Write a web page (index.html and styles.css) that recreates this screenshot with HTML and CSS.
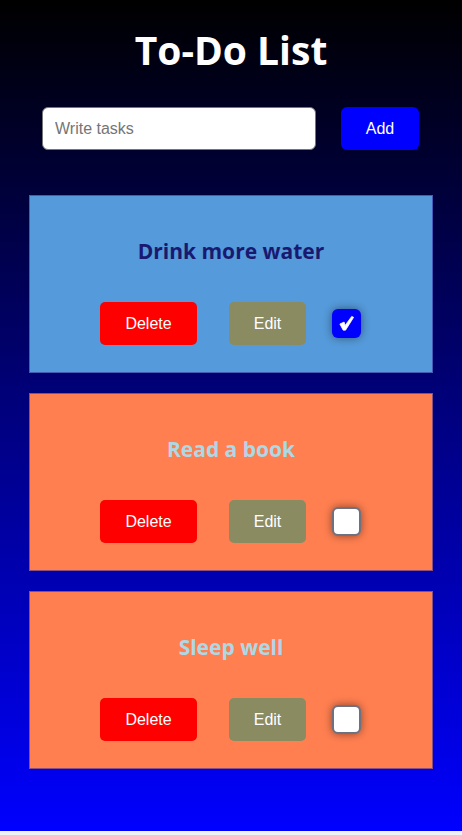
FILE: index.html
```html
<!DOCTYPE html>
<html lang="en">
<head>
<meta charset="utf-8">
<title>To-Do List</title>
<link rel="stylesheet" href="styles.css">
</head>
<body>
<div class="app">
  <h1 class="title">To-Do List</h1>
  <div class="add-row">
    <input class="task-input" type="text" placeholder="Write tasks">
    <button class="add-btn">Add</button>
  </div>
  <div class="list">
    <div class="card card-done">
      <h2 class="card-title">Drink more water</h2>
      <div class="actions">
        <button class="btn btn-delete">Delete</button>
        <button class="btn btn-edit">Edit</button>
        <span class="check checked">
          <svg viewBox="0 0 20 20" width="19" height="19"><path d="M3 10.5 L7.5 8.5 L8.5 12 L15.5 2.5 L17.5 3.5 L9 17 L6.5 17 Z" fill="#fff" stroke="#fff" stroke-width="0.8" stroke-linejoin="round"/></svg>
        </span>
      </div>
    </div>
    <div class="card card-todo">
      <h2 class="card-title">Read a book</h2>
      <div class="actions">
        <button class="btn btn-delete">Delete</button>
        <button class="btn btn-edit">Edit</button>
        <span class="check"></span>
      </div>
    </div>
    <div class="card card-todo">
      <h2 class="card-title">Sleep well</h2>
      <div class="actions">
        <button class="btn btn-delete">Delete</button>
        <button class="btn btn-edit">Edit</button>
        <span class="check"></span>
      </div>
    </div>
  </div>
</div>
</body>
</html>
```
FILE: styles.css
```css
html { background: #eef1f6; }
body { margin: 0; }
.app {
  height: 831px;
  box-sizing: border-box;
  background: linear-gradient(to bottom, #000000, #0000ff);
  padding-top: 26px;
}
.title {
  margin: 0;
  text-align: center;
  color: #fff;
  font-family: "Open Sans", sans-serif;
  font-weight: 700;
  font-size: 39px;
  line-height: 48px;
}
.add-row {
  display: flex;
  margin: 33px 0 0 42px;
  gap: 25px;
}
.task-input {
  width: 274px;
  height: 43px;
  box-sizing: border-box;
  border: 1px solid #767676;
  border-radius: 6px;
  padding: 0 12px;
  font-family: "Liberation Sans", Arial, sans-serif;
  font-size: 16px;
  background: #fff;
}
.task-input::placeholder { color: #757575; }
.add-btn {
  width: 78px;
  height: 43px;
  border: none;
  border-radius: 6px;
  background: #0000ff;
  color: #fff;
  font-family: "Liberation Sans", Arial, sans-serif;
  font-size: 16px;
}
.list {
  display: flex;
  flex-direction: column;
  gap: 20px;
  margin: 45px 29px 0 29px;
  width: 404px;
}
.card {
  height: 178px;
  box-sizing: border-box;
  border: 1px solid rgba(60, 50, 160, 0.6);
  display: flex;
  flex-direction: column;
  align-items: center;
}
.card-done { background: #559ada; }
.card-todo { background: #ff7f50; }
.card-title {
  margin: 41px 0 0;
  font-family: "Open Sans", sans-serif;
  font-weight: 700;
  font-size: 21px;
  line-height: 28px;
}
.card-done .card-title { color: #191970; }
.card-todo .card-title { color: #add8e6; }
.actions {
  display: flex;
  align-items: center;
  margin-top: 37px;
  margin-right: 1px;
}
.btn {
  height: 43px;
  border: none;
  border-radius: 5px;
  color: #fff;
  font-family: "Liberation Sans", Arial, sans-serif;
  font-size: 16px;
}
.btn-delete { width: 97px; background: #ff0000; }
.btn-edit { width: 77px; background: #8b8b62; margin-left: 32px; }
.check {
  width: 29px;
  height: 29px;
  box-sizing: border-box;
  margin-left: 26px;
  border-radius: 6px;
  border: 2px solid #6e7180;
  background: #fff;
  box-shadow: 0 0 8px rgba(0, 0, 0, 0.45);
  display: flex;
  align-items: center;
  justify-content: center;
}
.check.checked {
  background: #0000ff;
  border: none;
}
```
